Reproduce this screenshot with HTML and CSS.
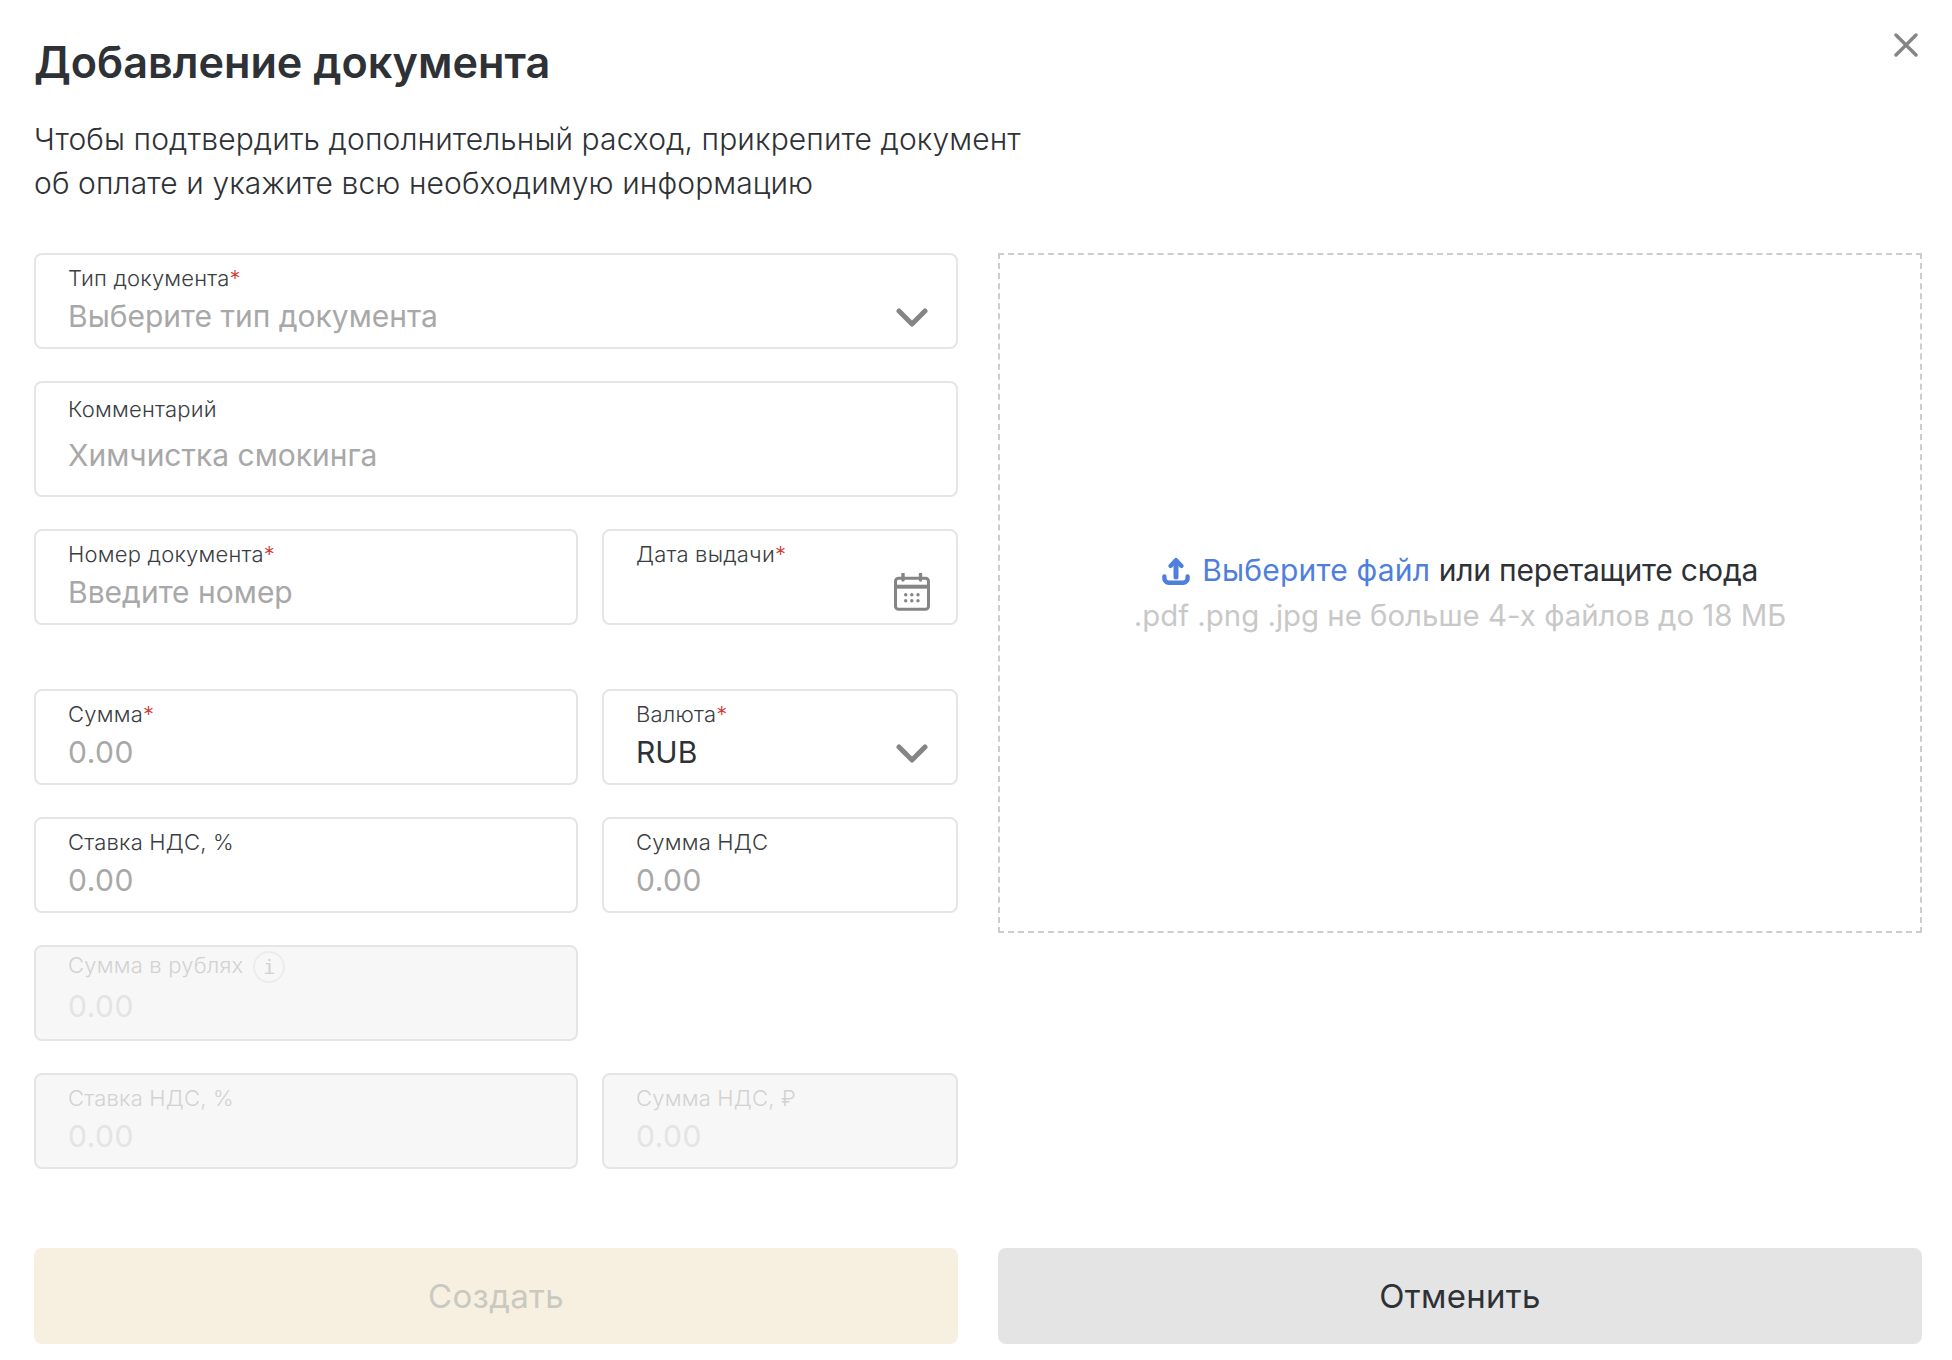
FILE: index.html
```html
<!DOCTYPE html>
<html lang="ru">
<head>
  <meta charset="UTF-8" />
  <title>Добавление документа</title>
  <link rel="stylesheet" href="styles.css">
</head>
<body>
  <div class="modal">
    <button type="button" class="close-btn" aria-label="Закрыть">
      <svg width="24" height="24" viewBox="0 0 24 24"><path d="M2 2l20 20M22 2L2 22" stroke="#858585" stroke-width="3.4" stroke-linecap="round" fill="none"/></svg>
    </button>

    <h1>Добавление документа</h1>
    <p class="intro">Чтобы подтвердить дополнительный расход, прикрепите документ<br>об оплате и укажите всю необходимую информацию</p>

    <div class="columns">
      <form class="fields">
        <div class="field wide">
          <span class="label">Тип документа<i>*</i></span>
          <span class="value placeholder">Выберите тип документа</span>
          <svg class="field-icon chevron" width="32" height="20" viewBox="0 0 32 20"><path d="M3 3l13 13L29 3" stroke="#858585" stroke-width="5" stroke-linecap="round" stroke-linejoin="round" fill="none"/></svg>
        </div>

        <div class="field wide tall">
          <span class="label">Комментарий</span>
          <span class="value placeholder">Химчистка смокинга</span>
        </div>

        <div class="field">
          <span class="label">Номер документа<i>*</i></span>
          <span class="value placeholder">Введите номер</span>
        </div>
        <div class="field">
          <span class="label">Дата выдачи<i>*</i></span>
          <svg class="field-icon calendar" width="36" height="38" viewBox="0 0 36 38">
            <path d="M9 1v6M26.5 1v6" stroke="#858585" stroke-width="3.4" stroke-linecap="round"/>
            <rect x="1.5" y="5.2" width="33" height="31" rx="3" fill="none" stroke="#858585" stroke-width="3"/>
            <path d="M2 13.7h32" stroke="#858585" stroke-width="4"/>
            <g fill="#858585">
              <circle cx="11.7" cy="21.7" r="1.7"/><circle cx="17.8" cy="21.7" r="1.7"/><circle cx="24" cy="21.7" r="1.7"/>
              <circle cx="11.7" cy="27.7" r="1.7"/><circle cx="17.8" cy="27.7" r="1.7"/><circle cx="24" cy="27.7" r="1.7"/>
            </g>
          </svg>
        </div>

        <div class="field spaced">
          <span class="label">Сумма<i>*</i></span>
          <span class="value placeholder num">0.00</span>
        </div>
        <div class="field spaced">
          <span class="label">Валюта<i>*</i></span>
          <span class="value">RUB</span>
          <svg class="field-icon chevron" width="32" height="20" viewBox="0 0 32 20"><path d="M3 3l13 13L29 3" stroke="#858585" stroke-width="5" stroke-linecap="round" stroke-linejoin="round" fill="none"/></svg>
        </div>

        <div class="field">
          <span class="label">Ставка НДС, %</span>
          <span class="value placeholder num">0.00</span>
        </div>
        <div class="field">
          <span class="label">Сумма НДС</span>
          <span class="value placeholder num">0.00</span>
        </div>

        <div class="field disabled first-col">
          <span class="label has-info">Сумма в рублях <b class="info">i</b></span>
          <span class="value num">0.00</span>
        </div>

        <div class="field disabled first-col">
          <span class="label">Ставка НДС, %</span>
          <span class="value num">0.00</span>
        </div>
        <div class="field disabled">
          <span class="label">Сумма НДС, ₽</span>
          <span class="value num">0.00</span>
        </div>
      </form>

      <div class="dropzone">
        <div class="drop-title">
          <svg class="upload-icon" width="28" height="28" viewBox="0 0 28 28"><path d="M14 20V4" stroke="#4f7fdc" stroke-width="5" stroke-linecap="round" fill="none"/><path d="M8.5 9L14 3.2 19.5 9" stroke="#4f7fdc" stroke-width="4.4" stroke-linecap="round" stroke-linejoin="round" fill="none"/><path d="M2.4 19.5v2a4.4 4.4 0 0 0 4.4 4.3h14.4a4.4 4.4 0 0 0 4.4-4.3v-2" stroke="#4f7fdc" stroke-width="4.4" stroke-linecap="round" fill="none"/></svg>
          <a href="#">Выберите файл</a> <span class="drop-tail">или перетащите сюда</span>
        </div>
        <div class="drop-hint">.pdf .png .jpg не больше 4-х файлов до 18 МБ</div>
      </div>
    </div>

    <div class="actions">
      <button type="button" class="btn btn-create" disabled>Создать</button>
      <button type="button" class="btn btn-cancel">Отменить</button>
    </div>
  </div>
</body>
</html>
```

FILE: styles.css
```css
*{box-sizing:border-box}
body{margin:0;background:#fff;font-family:Inter,"Noto Sans",sans-serif;color:#2e3135}
.modal{position:relative;padding:34px 30px 0 34px}
.close-btn{position:absolute;top:33px;right:34px;width:24px;height:24px;padding:0;border:none;background:none;cursor:pointer}
h1{margin:0;font-size:43.2px;line-height:56px;font-weight:600}
.intro{margin:27px 0 0;font-size:30px;line-height:44px;font-weight:300;letter-spacing:.1px}
.columns{display:grid;grid-template-columns:924px 924px;column-gap:40px;margin-top:48px;align-items:start}
.fields{display:grid;grid-template-columns:544px 356px;column-gap:24px;row-gap:32px}
.field{position:relative;display:flex;flex-direction:column;height:96px;padding:9px 32px 0;border:2px solid #e5e5e5;border-radius:8px;background:#fff}
.wide{grid-column:1 / 3}
.tall{height:116px;padding-top:12px}
.tall .value{margin-top:13px}
.spaced{margin-top:32px}
.first-col{grid-column:1 / 2}
.label{font-size:22px;line-height:28px;font-weight:300;letter-spacing:.2px;color:#3a3d41}
.label i{font-style:normal;color:#d0342c}
.value{margin-top:5px;font-size:30px;line-height:38px;color:#2e3135}
.num{letter-spacing:.5px}
.placeholder{color:#a8a8a8}
.field-icon{position:absolute}
.chevron{right:28px;top:53px}
.calendar{right:26px;top:42px}
.disabled{background:#f7f7f7}
.disabled .label{color:#d2d2d2}
.disabled .value{color:#e4e4e4}
.has-info{display:flex;align-items:center;height:28px;margin-top:-5px}
.has-info + .value{margin-top:8px}
.info{flex:none;width:32px;height:32px;margin:4px 0 0 10px;border:2px solid #ececec;border-radius:50%;font-family:"DejaVu Sans Mono",monospace;font-size:20px;line-height:28px;font-weight:400;text-align:center;color:#d2d2d2}
.dropzone{display:flex;flex-direction:column;align-items:center;justify-content:center;height:680px;border:2px dashed #cdcdcd;font-size:30px;line-height:45px}
.upload-icon{margin-right:4px;vertical-align:-4px}
.drop-title a{color:#4f7fdc;text-decoration:none;letter-spacing:.2px}
.drop-tail{letter-spacing:-.2px}
.drop-hint{font-size:29.4px;color:#c8c8c8}
.actions{display:grid;grid-template-columns:924px 924px;column-gap:40px;margin-top:79px}
.btn{height:96px;border:none;border-radius:8px;font:400 33px Inter,"Noto Sans",sans-serif;letter-spacing:.3px;cursor:pointer}
.btn-create{background:#f7f0e0;color:#c9c9c2}
.btn-cancel{background:#e4e4e4;color:#2e3135}
```
